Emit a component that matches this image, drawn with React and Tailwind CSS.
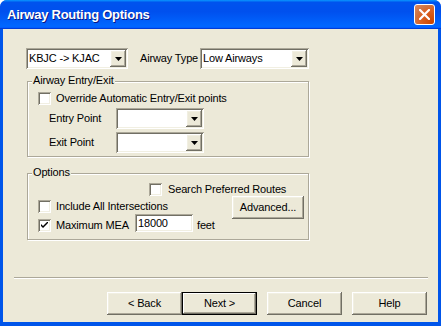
import React from "react";

// classic 3D edges used across the dialog
const sunken =
  "bg-white shadow-[inset_1px_1px_0_#aca899,inset_-1px_-1px_0_#ffffff,inset_2px_2px_0_#716f64,inset_-2px_-2px_0_#f1efe2]";
const raised =
  "bg-[#ece9d8] shadow-[inset_-1px_-1px_0_#716f64,inset_1px_1px_0_#ffffff,inset_-2px_-2px_0_#aca899,inset_2px_2px_0_#f1efe2]";

const DropButton = () => (
  <span className={`flex h-[17px] w-[16px] items-center justify-center ${raised}`}>
    <svg width="7" height="4" viewBox="0 0 7 4">
      <polygon points="0,0 7,0 3.5,4" fill="#000" />
    </svg>
  </span>
);

const Combo = ({ width, text }) => (
  <div className={`flex h-[21px] items-center justify-between pl-[3px] pr-[2px] ${sunken} ${width}`}>
    <span className="leading-[13px]">{text}</span>
    <DropButton />
  </div>
);

const Checkbox = ({ checked }) => (
  <span className={`flex h-[13px] w-[13px] shrink-0 items-center justify-center ${sunken}`}>
    {checked && (
      <svg width="7" height="7" viewBox="0 0 7 7">
        <path d="M0 2 L0 4 L2 6 L7 1 L7 -1 L2 4 Z" fill="#000" />
      </svg>
    )}
  </span>
);

const Group = ({ label, className, children }) => (
  <div
    className={`relative border border-[#aca899] shadow-[1px_1px_0_#ffffff,inset_1px_1px_0_#ffffff] ${className}`}
  >
    <span className="absolute -top-[8px] left-[4px] bg-[#ece9d8] px-[1px] leading-[13px]">
      {label}
    </span>
    {children}
  </div>
);

const PushButton = ({ label, isDefault }) => (
  <div
    className={`flex h-[23px] w-[75px] items-center justify-center ${
      isDefault
        ? "border border-black bg-[#ece9d8] shadow-[inset_-1px_-1px_0_#716f64,inset_1px_1px_0_#ffffff,inset_-2px_-2px_0_#aca899]"
        : raised
    }`}
  >
    {label}
  </div>
);

export default function App() {
  return (
    <div className="flex h-[326px] w-[441px] flex-col overflow-hidden rounded-t-[7px] bg-[#0055ea] font-['Liberation_Sans',Arial,sans-serif] text-[11px] tracking-[-0.15px] text-black">
      {/* title bar */}
      <div className="flex h-[29px] shrink-0 items-center justify-between bg-[linear-gradient(180deg,#0997ff,#0053ee_8%,#0050ee_40%,#0066ff_88%,#0066ff_93%,#005bff_95%,#003dd7_96%,#003dd7)] pl-[7px] pr-[6px]">
        <span className="text-[13px] font-bold tracking-[-0.25px] text-white [text-shadow:1px_1px_0_#0a1883]">
          Airway Routing Options
        </span>
        <span className="flex h-[21px] w-[21px] items-center justify-center rounded-[3px] border border-white bg-[radial-gradient(circle_at_90%_90%,#cc4600_0%,#dc6527_55%,#cd7546_70%,#e48a5c_100%)]">
          <svg width="11" height="11" viewBox="0 0 11 11">
            <path d="M1 1 L10 10 M10 1 L1 10" stroke="#fff" strokeWidth="2.2" strokeLinecap="square" />
          </svg>
        </span>
      </div>

      {/* body */}
      <div className="mx-[3px] mb-[4px] flex flex-1 flex-col bg-[#ece9d8] pt-[19px]">
        <div className="ml-[23px] flex items-center">
          <Combo width="w-[102px]" text="KBJC -> KJAC" />
          <span className="ml-[12px] w-[60px] leading-[13px]">Airway Type</span>
          <Combo width="w-[109px]" text="Low Airways" />
        </div>

        <Group label="Airway Entry/Exit" className="ml-[24px] mt-[12px] h-[76px] w-[282px]">
          <div className="flex flex-col pl-[10px] pt-[10px]">
            <div className="flex h-[13px] items-center gap-[5px]">
              <Checkbox />
              <span className="leading-[13px]">Override Automatic Entry/Exit points</span>
            </div>
            <div className="mt-[3px] flex items-center">
              <span className="ml-[11px] w-[67px] leading-[13px]">Entry Point</span>
              <Combo width="w-[88px]" text="" />
            </div>
            <div className="mt-[3px] flex items-center">
              <span className="ml-[11px] w-[67px] leading-[13px]">Exit Point</span>
              <Combo width="w-[88px]" text="" />
            </div>
          </div>
        </Group>

        <Group label="Options" className="ml-[24px] mt-[16px] h-[67px] w-[282px]">
          <div className="flex flex-col pl-[10px] pt-[9px]">
            <div className="ml-[111px] flex h-[13px] items-center gap-[6px]">
              <Checkbox />
              <span className="leading-[13px]">Search Preferred Routes</span>
            </div>
            <div className="flex justify-between pr-[4px]">
              <div className="flex flex-col">
                <div className="mt-[4px] flex h-[13px] items-center gap-[5px]">
                  <Checkbox />
                  <span className="leading-[13px]">Include All Intersections</span>
                </div>
                <div className="mt-[1px] flex h-[18px] items-end">
                  <Checkbox checked />
                  <span className="ml-[5px] w-[79px] leading-[13px]">Maximum MEA</span>
                  <div className={`flex h-[18px] w-[58px] items-center pl-[3px] ${sunken}`}>
                    18000
                  </div>
                  <span className="ml-[4px] leading-[13px]">feet</span>
                </div>
              </div>
              <div className={`flex h-[23px] w-[72px] items-center justify-center ${raised}`}>
                Advanced...
              </div>
            </div>
          </div>
        </Group>

        <div className="ml-[11px] mt-[37px] h-[2px] w-[414px] border-t border-[#aca899] bg-white" />

        <div className="ml-[104px] mt-[13px] flex">
          <PushButton label="< Back" />
          <PushButton label="Next >" isDefault />
          <div className="ml-[10px]">
            <PushButton label="Cancel" />
          </div>
          <div className="ml-[10px]">
            <PushButton label="Help" />
          </div>
        </div>
      </div>
    </div>
  );
}
